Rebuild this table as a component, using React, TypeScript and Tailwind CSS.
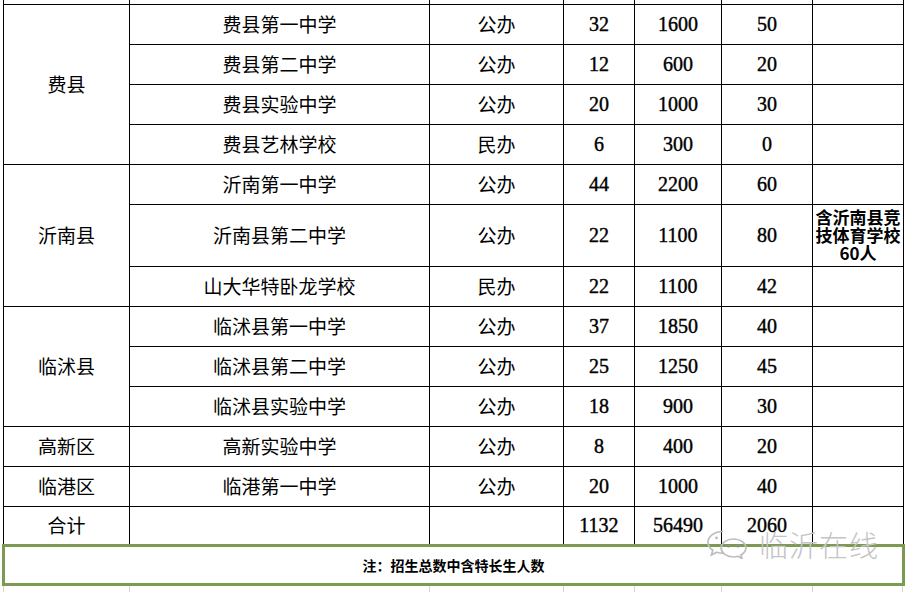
type Row = {
  county?: string
  span?: number
  school: string
  kind: string
  a: string
  b: string
  c: string
  note?: string
  tall?: boolean
}

const rows: Row[] = [
  { county: '费县', span: 4, school: '费县第一中学', kind: '公办', a: '32', b: '1600', c: '50' },
  { school: '费县第二中学', kind: '公办', a: '12', b: '600', c: '20' },
  { school: '费县实验中学', kind: '公办', a: '20', b: '1000', c: '30' },
  { school: '费县艺林学校', kind: '民办', a: '6', b: '300', c: '0' },
  { county: '沂南县', span: 3, school: '沂南第一中学', kind: '公办', a: '44', b: '2200', c: '60' },
  {
    school: '沂南县第二中学',
    kind: '公办',
    a: '22',
    b: '1100',
    c: '80',
    note: '含沂南县竞技体育学校60人',
    tall: true,
  },
  { school: '山大华特卧龙学校', kind: '民办', a: '22', b: '1100', c: '42' },
  { county: '临沭县', span: 3, school: '临沭县第一中学', kind: '公办', a: '37', b: '1850', c: '40' },
  { school: '临沭县第二中学', kind: '公办', a: '25', b: '1250', c: '45' },
  { school: '临沭县实验中学', kind: '公办', a: '18', b: '900', c: '30' },
  { county: '高新区', span: 1, school: '高新实验中学', kind: '公办', a: '8', b: '400', c: '20' },
  { county: '临港区', span: 1, school: '临港第一中学', kind: '公办', a: '20', b: '1000', c: '40' },
]

const td = 'border border-black p-0 text-center align-middle text-black'
const zh = "font-['Noto_Sans_CJK_SC','Noto_Sans',sans-serif] text-[19px]"
const nm =
  "font-['Liberation_Serif','Noto_Sans_CJK_SC',serif] text-[20px] [-webkit-text-stroke:0.4px_#000]"

const cols = ['w-[126px]', 'w-[300px]', 'w-[134px]', 'w-[71px]', 'w-[87px]', 'w-[91px]', 'w-[91px]']

function WeChatMark() {
  return (
    <svg width="46" height="30" viewBox="0 0 46 30" fill="none" stroke="#bdbdbd" strokeWidth="1.7">
      <path d="M18 2.5C9.5 2.5 3 7.3 3 13.3c0 3.2 1.8 6 4.8 7.9L6.4 26l5.3-2.8c1.9.6 4 .9 6.3.9" />
      <path d="M28.5 10c-6.9 0-12.3 4-12.3 9s5.4 9 12.3 9c1.6 0 3.2-.2 4.6-.7L37 29.5l-1-3.7c3-1.6 4.9-4 4.9-6.8 0-5-5.5-9-12.4-9z" />
      <circle cx="11.5" cy="9" r="1.4" fill="#bdbdbd" stroke="none" />
      <circle cx="23.5" cy="17" r="1.5" fill="#8c8c8c" stroke="none" />
      <circle cx="33" cy="17" r="1.5" fill="#8c8c8c" stroke="none" />
    </svg>
  )
}

export default function App() {
  return (
    <div className="relative w-[907px] h-[592px] overflow-hidden bg-white">
      <div className="pl-[3px]">
        <table className="table-fixed border-collapse w-[901px]">
          <colgroup>
            {cols.map((c, i) => (
              <col key={i} className={c} />
            ))}
          </colgroup>
          <tbody>
            <tr className="h-[4px]">
              {cols.map((_, i) => (
                <td key={i} className="border-x border-b border-black p-0" />
              ))}
            </tr>
            {rows.map((r, i) => (
              <tr key={i} className={r.tall ? 'h-[62px]' : 'h-[40px]'}>
                {r.county && (
                  <td rowSpan={r.span} className={`${td} ${zh}`}>
                    {r.county}
                  </td>
                )}
                <td className={`${td} ${zh}`}>{r.school}</td>
                <td className={`${td} ${zh}`}>{r.kind}</td>
                <td className={`${td} ${nm}`}>{r.a}</td>
                <td className={`${td} ${nm}`}>{r.b}</td>
                <td className={`${td} ${nm}`}>{r.c}</td>
                <td
                  className={`${td} font-['Noto_Sans_CJK_SC',sans-serif] text-[17px] leading-[18px] font-bold px-[2px]`}
                >
                  {r.note}
                </td>
              </tr>
            ))}
            <tr className="h-[38px]">
              <td className={`${td} border-b-0 ${zh}`}>合计</td>
              <td className={`${td} border-b-0`} />
              <td className={`${td} border-b-0`} />
              <td className={`${td} border-b-0 ${nm}`}>1132</td>
              <td className={`${td} border-b-0 ${nm}`}>56490</td>
              <td className={`${td} border-b-0 ${nm}`}>2060</td>
              <td className={`${td} border-b-0`} />
            </tr>
          </tbody>
        </table>
      </div>

      <div className="ml-[2px] w-[903px] h-[42px] border-[3px] border-[#7c9a52] bg-white flex items-center justify-center">
        <span className="font-['Noto_Sans_CJK_SC',sans-serif] text-[14px] font-bold text-black">
          注：招生总数中含特长生人数
        </span>
      </div>

      <div className="flex pl-[3px] h-[6px]">
        {cols.map((c, i) => (
          <div key={i} className={`${c} border-l border-[#d4d4d4] last:border-r`} />
        ))}
      </div>

      <div className="absolute left-[705px] top-[529px] flex items-center gap-[8px]">
        <WeChatMark />
        <span className="font-['Noto_Sans_CJK_SC',sans-serif] text-[29px] leading-none font-light text-[#c4c4c4] tracking-[1px]">
          临沂在线
        </span>
      </div>
    </div>
  )
}
